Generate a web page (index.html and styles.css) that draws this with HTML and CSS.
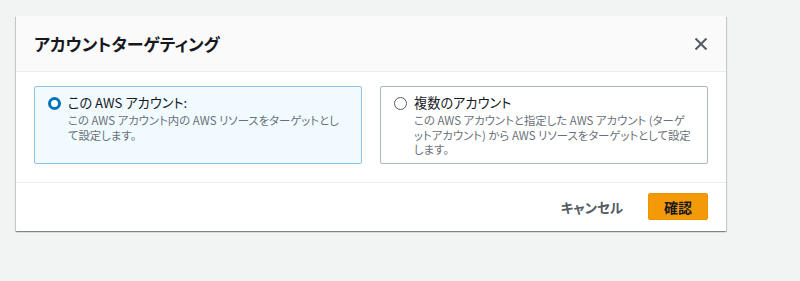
FILE: index.html
```html
<!DOCTYPE html>
<html lang="ja">
<head>
<meta charset="utf-8">
<link rel="stylesheet" href="styles.css">
</head>
<body>
<div class="backdrop">
  <div class="modal">
    <div class="modal-header">
      <h2 class="modal-title">アカウントターゲティング</h2>
      <button class="close" aria-label="閉じる">
        <svg width="14" height="14" viewBox="0 0 14 14"><path d="M1.5 1.5 L12.5 12.5 M12.5 1.5 L1.5 12.5" stroke="#545b64" stroke-width="2" fill="none"/></svg>
      </button>
    </div>
    <div class="modal-body">
      <div class="tiles">
        <label class="tile tile-selected">
          <span class="radio radio-on"></span>
          <span class="tile-text">
            <span class="tile-label">この AWS アカウント:</span>
            <span class="tile-desc">この AWS アカウント内の AWS リソースをターゲットとして設定します。</span>
          </span>
        </label>
        <label class="tile">
          <span class="radio"></span>
          <span class="tile-text">
            <span class="tile-label">複数のアカウント</span>
            <span class="tile-desc">この AWS アカウントと指定した AWS アカウント (ターゲットアカウント) から AWS リソースをターゲットとして設定します。</span>
          </span>
        </label>
      </div>
    </div>
    <div class="modal-footer">
      <button class="btn-link">キャンセル</button>
      <button class="btn-primary">確認</button>
    </div>
  </div>
</div>
</body>
</html>
```
FILE: styles.css
```css
* { box-sizing: border-box; }
html, body { margin: 0; padding: 0; }
body {
  background: #f2f3f3;
  font-family: "Noto Sans CJK JP", "Noto Sans", sans-serif;
  color: #16191f;
  width: 800px;
  height: 281px;
  overflow: hidden;
}
.backdrop {
  padding: 16px 0 0 16px;
}
.modal {
  width: 710px;
  background: #fff;
  box-shadow: 0 1px 1px 0 rgba(0,28,36,.3), 1px 1px 1px 0 rgba(0,28,36,.15), -1px 1px 1px 0 rgba(0,28,36,.15);
}
.modal-header {
  display: flex;
  align-items: center;
  justify-content: space-between;
  background: #fafafa;
  border-bottom: 1px solid #eaeded;
  height: 56px;
  padding: 0 18px 0 18px;
}
.modal-title {
  margin: 0;
  font-size: 17px;
  font-weight: 700;
  line-height: 22px;
  font-feature-settings: "palt";
}
.close {
  border: 0;
  background: none;
  padding: 0;
  width: 14px;
  height: 14px;
  display: flex;
}
.modal-body {
  padding: 14px 18px 18px 18px;
}
.tiles {
  display: grid;
  grid-template-columns: 1fr 1fr;
  gap: 18px;
}
.tile {
  display: flex;
  align-items: flex-start;
  gap: 7px;
  height: 78px;
  border: 1px solid #aab7b8;
  border-radius: 2px;
  padding: 6px 14px 6px 13px;
  background: #fff;
}
.tile-selected {
  background: #f1faff;
  border-color: #8fc3e6;
}
.radio {
  flex: none;
  width: 13px;
  height: 13px;
  margin-top: 4px;
  border-radius: 50%;
  border: 1.5px solid #545b64;
  background: #fff;
}
.radio-on {
  border: 3.5px solid #0073bb;
}
.tile-text {
  display: flex;
  flex-direction: column;
}
.tile-label {
  font-size: 13.2px;
  line-height: 20px;
  font-feature-settings: "palt";
}
.tile-desc {
  font-size: 11.4px;
  line-height: 14.5px;
  color: #687078;
  font-feature-settings: "palt";
}
.modal-footer {
  display: flex;
  justify-content: flex-end;
  align-items: center;
  gap: 25px;
  border-top: 1px solid #eaeded;
  padding: 10px 18px 11px 18px;
}
.btn-link {
  border: 0;
  background: none;
  font-family: inherit;
  font-size: 13.5px;
  font-weight: 700;
  color: #545b64;
  padding: 0;
  font-feature-settings: "palt";
}
.btn-primary {
  border: 1px solid #ee9306;
  border-radius: 2px;
  background: #f49a08;
  font-family: inherit;
  font-size: 14px;
  font-weight: 700;
  color: #16191f;
  width: 60px;
  height: 27px;
  padding: 0;
}
```
